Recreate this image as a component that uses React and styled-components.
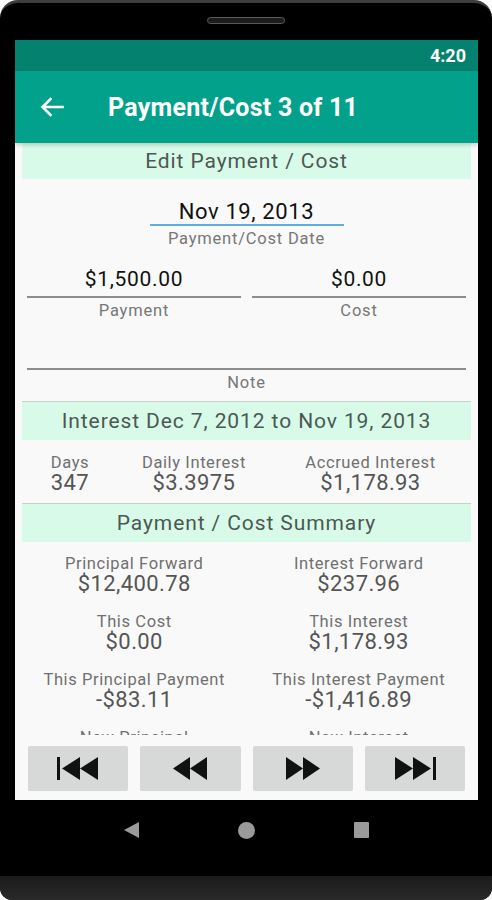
import React from "react";
import styled, { createGlobalStyle } from "styled-components";

const GlobalStyle = createGlobalStyle`
  html, body {
    margin: 0;
    padding: 0;
    background: #ffffff;
  }
  body {
    font-family: Roboto, "Noto Sans", "Liberation Sans", sans-serif;
  }
`;

const stats = [
  { label: "Days", value: "347" },
  { label: "Daily Interest", value: "$3.3975" },
  { label: "Accrued Interest", value: "$1,178.93" },
];

const summary = [
  { label: "Principal Forward", value: "$12,400.78" },
  { label: "Interest Forward", value: "$237.96" },
  { label: "This Cost", value: "$0.00" },
  { label: "This Interest", value: "$1,178.93" },
  { label: "This Principal Payment", value: "-$83.11" },
  { label: "This Interest Payment", value: "-$1,416.89" },
  { label: "New Principal", value: "$12,317.67" },
  { label: "New Interest", value: "$0.00" },
];

function BackArrow() {
  return (
    <svg width="24" height="20" viewBox="0 0 24 20">
      <path
        d="M22.5 10H3M10.5 2L2.5 10l8 8"
        fill="none"
        stroke="#fff"
        strokeWidth="2.6"
        strokeLinecap="square"
      />
    </svg>
  );
}

function SkipBack() {
  return (
    <svg width="42" height="23" viewBox="0 0 42 23">
      <rect x="0" y="0" width="3" height="23" fill="#111" />
      <polygon points="23,0 5,11.5 23,23" fill="#111" />
      <polygon points="41,0 23,11.5 41,23" fill="#111" />
    </svg>
  );
}

function Rewind() {
  return (
    <svg width="34" height="23" viewBox="0 0 34 23">
      <polygon points="17,0 0,11.5 17,23" fill="#111" />
      <polygon points="34,0 17,11.5 34,23" fill="#111" />
    </svg>
  );
}

function Forward() {
  return (
    <svg width="34" height="23" viewBox="0 0 34 23">
      <polygon points="0,0 17,11.5 0,23" fill="#111" />
      <polygon points="17,0 34,11.5 17,23" fill="#111" />
    </svg>
  );
}

function SkipForward() {
  return (
    <svg width="42" height="23" viewBox="0 0 42 23">
      <polygon points="1,0 19,11.5 1,23" fill="#111" />
      <polygon points="19,0 37,11.5 19,23" fill="#111" />
      <rect x="39" y="0" width="3" height="23" fill="#111" />
    </svg>
  );
}

function App() {
  return (
    <>
      <GlobalStyle />
      <Phone>
        <Earpiece>
          <Speaker />
        </Earpiece>
        <Screen>
          <StatusBar>4:20</StatusBar>
          <AppBar>
            <BackButton>
              <BackArrow />
            </BackButton>
            <Title>Payment/Cost 3 of 11</Title>
          </AppBar>
          <Scroll>
            <Band>Edit Payment / Cost</Band>
            <DateField>
              <DateValue>Nov 19, 2013</DateValue>
              <FieldLabel>Payment/Cost Date</FieldLabel>
            </DateField>
            <AmountRow>
              <div>
                <AmountValue>$1,500.00</AmountValue>
                <FieldLabel>Payment</FieldLabel>
              </div>
              <div>
                <AmountValue>$0.00</AmountValue>
                <FieldLabel>Cost</FieldLabel>
              </div>
            </AmountRow>
            <NoteField>
              <NoteInput />
              <FieldLabel>Note</FieldLabel>
            </NoteField>
            <Band $divided>Interest Dec 7, 2012 to Nov 19, 2013</Band>
            <StatsRow>
              {stats.map((s) => (
                <Stat key={s.label}>
                  <StatLabel>{s.label}</StatLabel>
                  <StatValue>{s.value}</StatValue>
                </Stat>
              ))}
            </StatsRow>
            <Band $divided>Payment / Cost Summary</Band>
            <SummaryGrid>
              {summary.map((s) => (
                <Stat key={s.label}>
                  <StatLabel>{s.label}</StatLabel>
                  <StatValue>{s.value}</StatValue>
                </Stat>
              ))}
            </SummaryGrid>
          </Scroll>
          <ButtonBar>
            <NavButton><SkipBack /></NavButton>
            <NavButton><Rewind /></NavButton>
            <NavButton><Forward /></NavButton>
            <NavButton><SkipForward /></NavButton>
          </ButtonBar>
        </Screen>
        <SystemNav>
          <NavBack />
          <NavHome />
          <NavRecent />
        </SystemNav>
        <Chin />
      </Phone>
    </>
  );
}

export default App;

const Phone = styled.div`
  width: 492px;
  height: 900px;
  box-sizing: border-box;
  background: #000;
  border-top: 3px solid #3d3d3d;
  border-radius: 18px 18px 12px 12px;
  display: flex;
  flex-direction: column;
  overflow: hidden;
`;

const Earpiece = styled.div`
  height: 37px;
  display: flex;
  justify-content: center;
  padding-top: 14px;
  box-sizing: border-box;
`;

const Speaker = styled.div`
  width: 78px;
  height: 7px;
  border-radius: 4px;
  background: #1c1c1c;
  border: 1px solid #5a5a5a;
  box-sizing: border-box;
`;

const Screen = styled.div`
  margin: 0 14px 0 15px;
  height: 760px;
  background: #f9f9f9;
  display: flex;
  flex-direction: column;
`;

const StatusBar = styled.div`
  height: 31px;
  background: #05816f;
  color: #fff;
  font-size: 18px;
  font-weight: 700;
  display: flex;
  align-items: center;
  justify-content: flex-end;
  padding-right: 12px;
`;

const AppBar = styled.div`
  height: 72px;
  background: #02a18b;
  display: flex;
  align-items: center;
  box-shadow: 0 2px 4px rgba(0, 0, 0, 0.18);
  position: relative;
  z-index: 1;
`;

const BackButton = styled.div`
  width: 93px;
  display: flex;
  padding-left: 25px;
  box-sizing: border-box;
`;

const Title = styled.div`
  color: #fff;
  font-size: 25px;
  font-weight: 700;
  letter-spacing: 0.25px;
`;

const Scroll = styled.div`
  flex: 1;
  overflow: hidden;
  display: flex;
  flex-direction: column;
`;

const Band = styled.div`
  margin: ${(p) => (p.$divided ? "8px 7px 0" : "0 7px")};
  border-top: ${(p) => (p.$divided ? "1px solid #c9cfcc" : "none")};
  height: ${(p) => (p.$divided ? "38px" : "36px")};
  background: #d8fbe9;
  color: #4c5853;
  font-size: 21px;
  letter-spacing: 0.9px;
  display: flex;
  align-items: center;
  justify-content: center;
  flex-shrink: 0;
`;

const DateField = styled.div`
  width: 194px;
  margin: 20px auto 0;
`;

const DateValue = styled.div`
  font-size: 22px;
  letter-spacing: 0.6px;
  line-height: 25px;
  color: #111;
  text-align: center;
  border-bottom: 2px solid #5eaee3;
`;

const FieldLabel = styled.div`
  font-size: 16.5px;
  letter-spacing: 0.8px;
  line-height: 20px;
  margin-top: 3px;
  color: #777;
  text-align: center;
`;

const AmountRow = styled.div`
  margin: 18px 12px 0;
  display: grid;
  grid-template-columns: 1fr 1fr;
  gap: 11px;
`;

const AmountValue = styled.div`
  font-size: 21px;
  letter-spacing: 0.7px;
  line-height: 24px;
  padding-bottom: 5px;
  color: #111;
  text-align: center;
  border-bottom: 2px solid #8d8d8d;
`;

const NoteField = styled.div`
  margin: 0 12px;
`;

const NoteInput = styled.div`
  height: 47px;
  border-bottom: 2px solid #8d8d8d;
`;

const StatsRow = styled.div`
  margin: 14px 7px 1px;
  display: grid;
  grid-template-columns: 96px 152px 1fr;
  flex-shrink: 0;
`;

const Stat = styled.div`
  display: flex;
  flex-direction: column;
  align-items: center;
`;

const StatLabel = styled.div`
  font-size: 16.5px;
  letter-spacing: 0.6px;
  line-height: 18px;
  color: #707070;
  white-space: nowrap;
`;

const StatValue = styled.div`
  font-size: 22px;
  letter-spacing: 0.4px;
  line-height: 22px;
  color: #555;
  white-space: nowrap;
`;

const SummaryGrid = styled.div`
  margin: 13px 7px 0;
  display: grid;
  grid-template-columns: 1fr 1fr;
  row-gap: 18px;
`;

const ButtonBar = styled.div`
  height: 65px;
  box-sizing: border-box;
  padding: 11px 13px 9px;
  display: flex;
  gap: 12px;
  background: #f9f9f9;
`;

const NavButton = styled.div`
  flex: 1;
  background: #d7d8d8;
  border-radius: 2px;
  display: flex;
  align-items: center;
  justify-content: center;
`;

const SystemNav = styled.div`
  height: 76px;
  display: flex;
  justify-content: center;
  align-items: flex-start;
  padding-top: 22px;
  box-sizing: border-box;
  gap: 99px;
`;

const NavBack = styled.div`
  width: 0;
  height: 0;
  border-top: 8px solid transparent;
  border-bottom: 8px solid transparent;
  border-right: 15px solid #9a9a9a;
`;

const NavHome = styled.div`
  width: 17px;
  height: 17px;
  border-radius: 50%;
  background: #9a9a9a;
`;

const NavRecent = styled.div`
  width: 15px;
  height: 16px;
  border-radius: 1px;
  background: #9a9a9a;
`;

const Chin = styled.div`
  flex: 1;
  background: linear-gradient(180deg, #1a1a1a 0%, #2a2a2a 100%);
  border-radius: 0 0 12px 12px;
`;
